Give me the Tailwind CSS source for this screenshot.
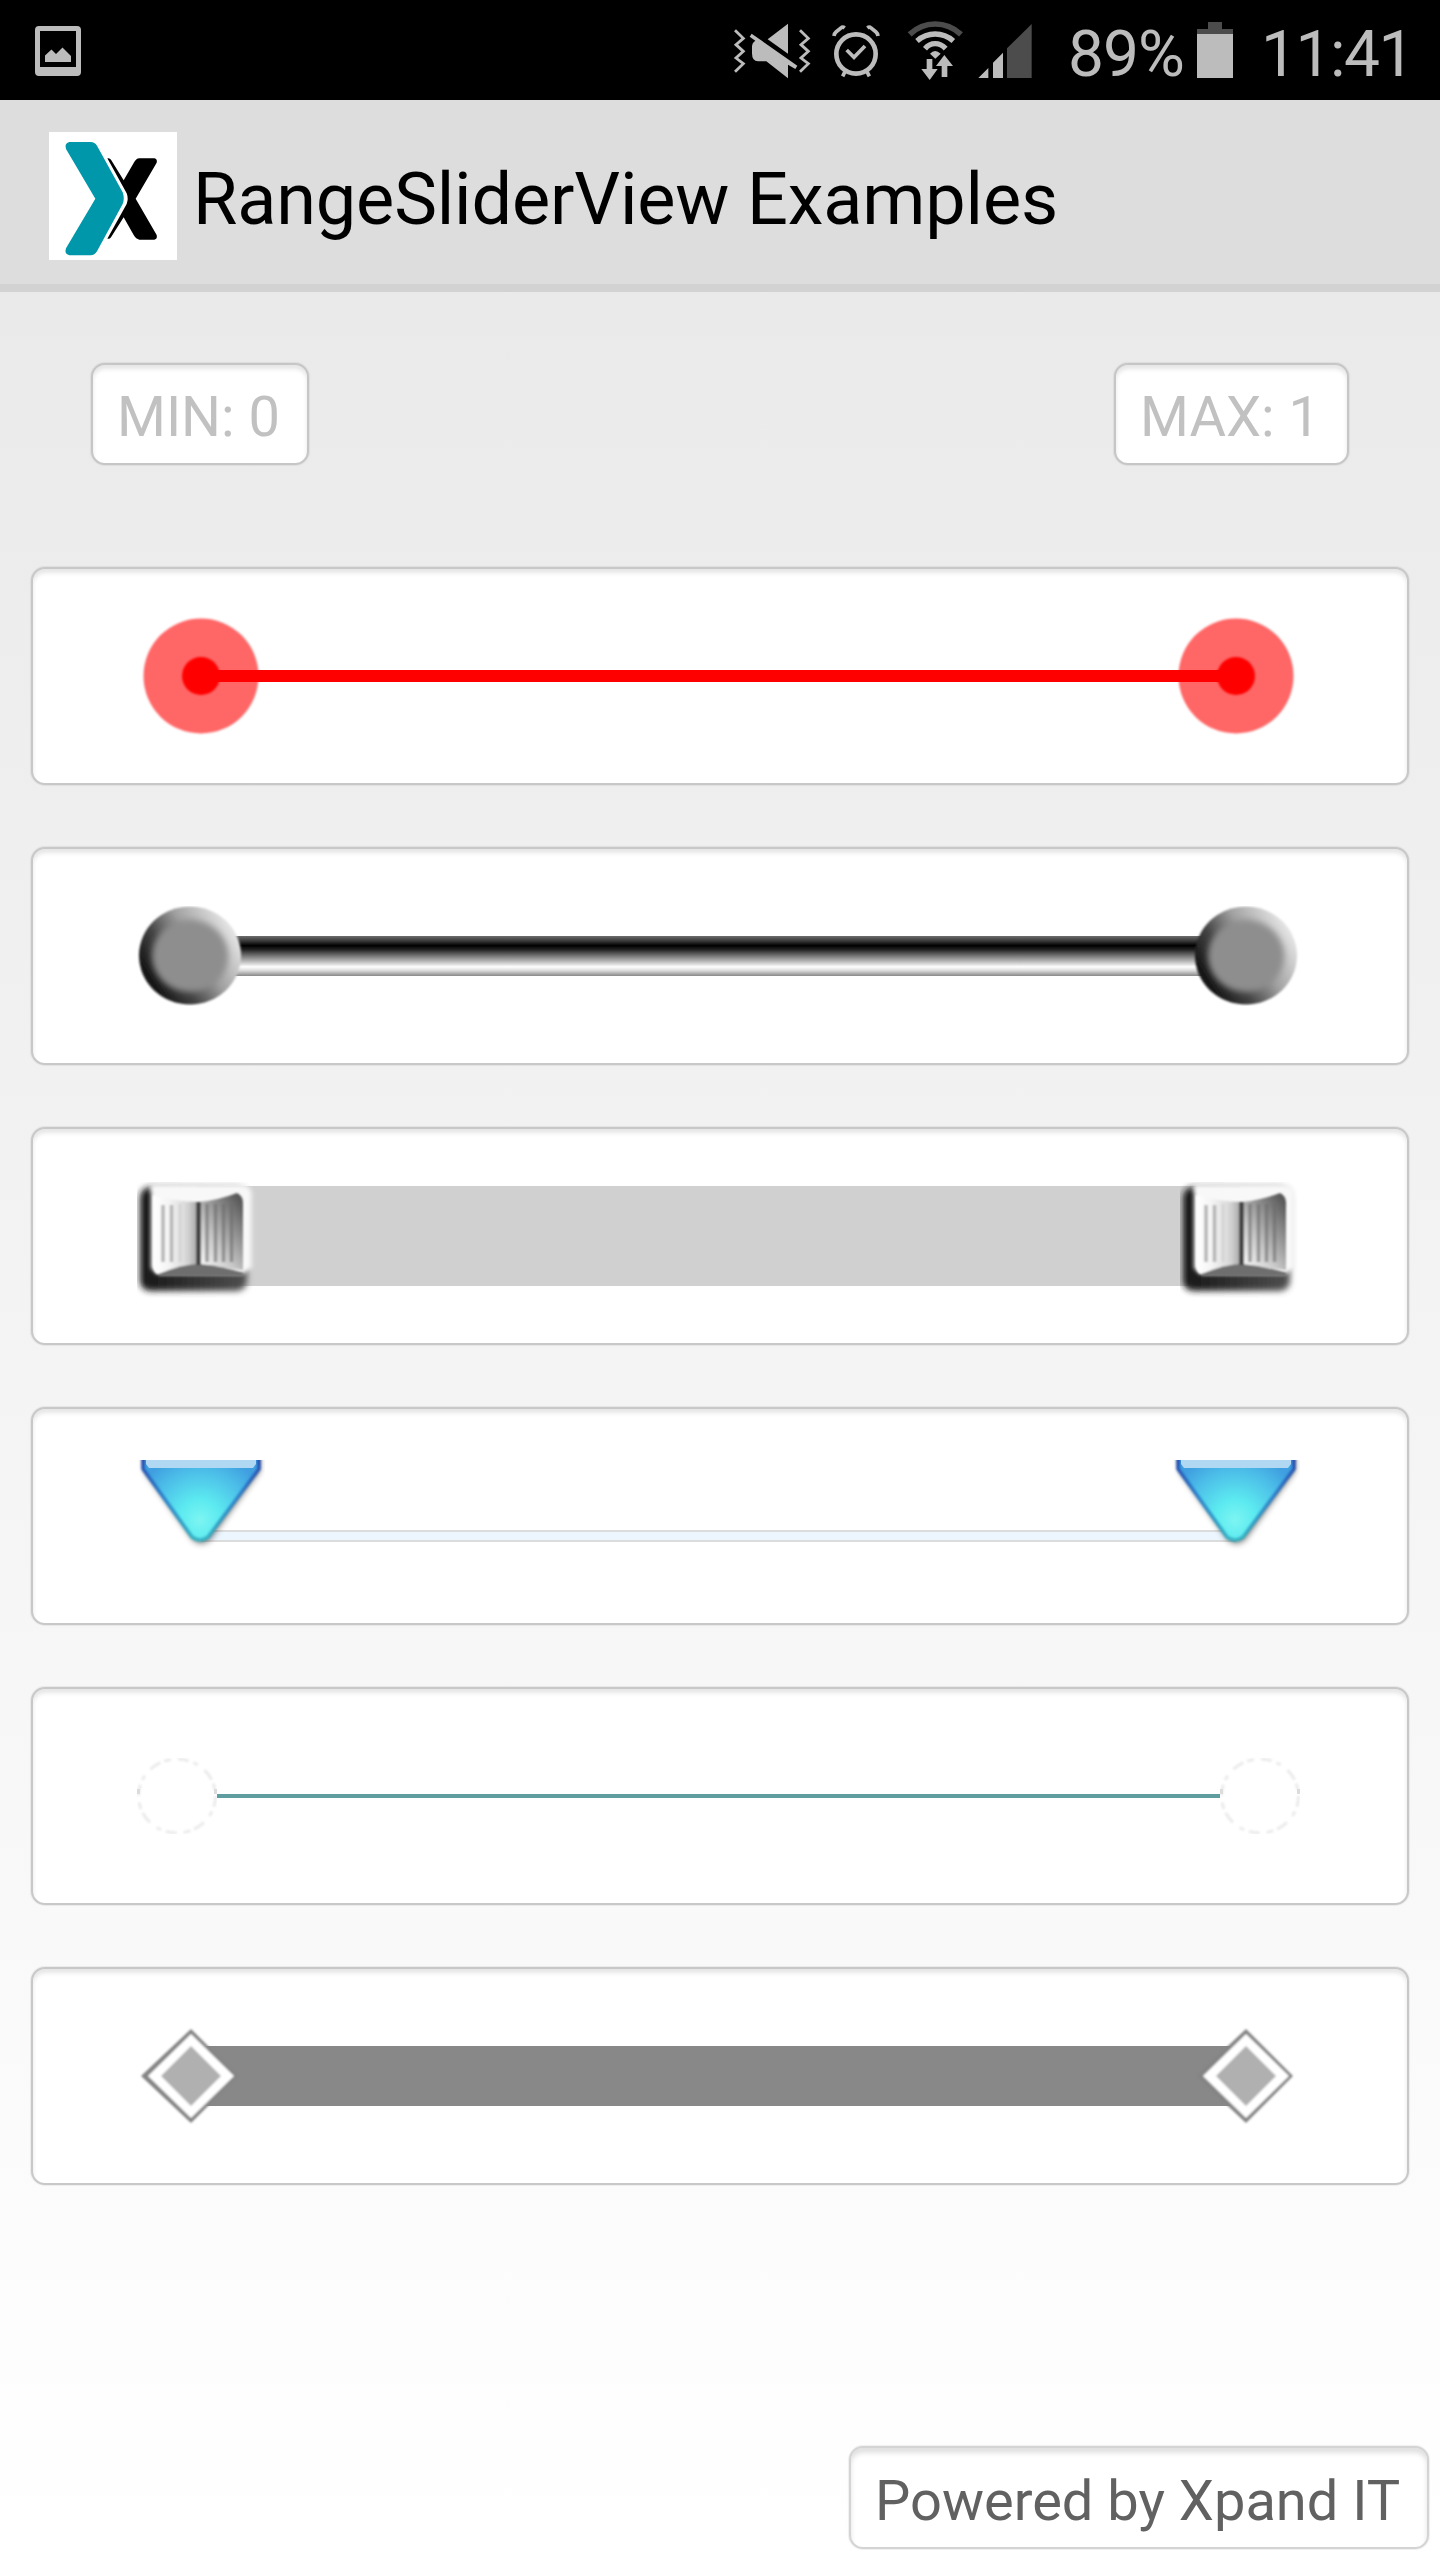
<!DOCTYPE html>
<html lang="en">
<head>
<meta charset="utf-8">
<title>RangeSliderView Examples</title>
<script src="https://cdn.jsdelivr.net/npm/@tailwindcss/browser@4"></script>
</head>
<body class="w-[1440px] h-[2560px] flex flex-col overflow-hidden bg-white font-[Roboto,sans-serif]">

<!-- shared thumb artwork -->
<svg class="absolute size-0" aria-hidden="true">
  <defs>
    <filter id="b05" x="-20%" y="-20%" width="140%" height="140%"><feGaussianBlur stdDeviation=".8"/></filter>
    <filter id="b1" x="-20%" y="-20%" width="140%" height="140%"><feGaussianBlur stdDeviation="1.200"/></filter>
    <filter id="b2" x="-20%" y="-20%" width="140%" height="140%"><feGaussianBlur stdDeviation="2"/></filter>
    <filter id="b3" x="-30%" y="-30%" width="160%" height="160%"><feGaussianBlur stdDeviation="3"/></filter>
    <linearGradient id="bevel" x1="0.08" y1="0.75" x2="0.92" y2="0.25">
      <stop offset="0" stop-color="#111"/><stop offset=".3" stop-color="#444"/><stop offset=".6" stop-color="#a0a0a0"/><stop offset="1" stop-color="#e4e4e4"/>
    </linearGradient>
    <linearGradient id="leftFace"><stop offset="0" stop-color="#fff"/><stop offset=".35" stop-color="#f4f4f4"/><stop offset=".75" stop-color="#d8d8d8"/><stop offset="1" stop-color="#a5a5a5"/></linearGradient>
    <linearGradient id="rightFace" x1="0" y1="1" x2=".8" y2="0"><stop offset="0" stop-color="#fff"/><stop offset=".4" stop-color="#c8c8c8"/><stop offset="1" stop-color="#5a5a5a"/></linearGradient>
    <linearGradient id="base"><stop offset="0" stop-color="#161616"/><stop offset="1" stop-color="#505050"/></linearGradient>
    <radialGradient id="aqua" gradientUnits="userSpaceOnUse" cx="63" cy="60" r="68"><stop offset="0" stop-color="#7df5f2"/><stop offset=".3" stop-color="#5ceaf0"/><stop offset=".75" stop-color="#4bbbe8"/><stop offset="1" stop-color="#3f9fe0"/></radialGradient>
    <linearGradient id="aquaEdge" x1="0" y1="0" x2="0" y2="1"><stop offset="0" stop-color="#2540a8"/><stop offset=".5" stop-color="#2f83cc"/><stop offset="1" stop-color="#38b5c4"/></linearGradient>
    <clipPath id="tri"><rect width="128" height="112"/></clipPath>
  </defs>
  <symbol id="thumb-red" viewBox="0 0 128 128">
    <circle cx="64" cy="64" r="57.500" fill="#f66" filter="url(#b1)"/>
    <circle cx="64" cy="64" r="19" fill="red" filter="url(#b1)"/>
  </symbol>
  <symbol id="thumb-ball" viewBox="0 0 108 100">
    <g filter="url(#b1)"><ellipse cx="53" cy="49.500" rx="51" ry="49" fill="url(#bevel)"/></g>
    <ellipse cx="53" cy="50" rx="38" ry="36" fill="#8e8e8e" filter="url(#b3)"/>
  </symbol>
  <symbol id="thumb-metal" viewBox="0 0 120 116">
    <rect x="3" y="5" width="107" height="104" rx="10" fill="url(#base)" filter="url(#b3)"/>
    <path d="M15 2H104Q115 3 115 13V86L106 92H20L14 86V12Q12 4 15 2Z" fill="#f8f8f8" filter="url(#b2)"/>
    <g filter="url(#b1)">
      <path d="M16 13Q40 20 61 20V84Q40 85 20 92Q16 89 16 82Z" fill="url(#leftFace)"/>
      <path d="M62 20Q82 18 100 11Q107 14 106 24V88Q84 86 62 83Z" fill="url(#rightFace)"/>
      <path d="M22 92Q45 82 62 82Q85 84 106 91V94H22Z" fill="#6e6e6e"/>
      <path d="M26 23V80M34.500 23V80" stroke="#b5b5b5" stroke-width="3.500"/>
      <path d="M43 22V80M50 22V80" stroke="#d2d2d2" stroke-width="2.500"/>
      <path d="M61.500 20V83" stroke="#444" stroke-width="5"/>
      <path d="M70 22V80M78.500 22V80M86.500 22V80M94.500 22V80" stroke="#6a6a6a" stroke-opacity=".6" stroke-width="3.500"/>
    </g>
  </symbol>
  <symbol id="thumb-tri" viewBox="0 0 128 112">
    <g clip-path="url(#tri)">
      <path d="M7 -6H123V11L73 80Q64 87 56 80L8 12Z" fill="#000" fill-opacity=".5" filter="url(#b3)"/>
      <path d="M6 -6H122V9L71 77Q63 83 55 77L6 9Z" fill="url(#aqua)"/>
      <path d="M6 -6V9L55 77Q63 83 71 77L122 9V-6" fill="none" stroke="url(#aquaEdge)" stroke-width="3.500" filter="url(#b1)"/>
      <path d="M9 0H119V4L116 8H12L9 4Z" fill="#b0d8f2"/>
    </g>
  </symbol>
  <symbol id="thumb-ring" viewBox="0 0 80 76">
    <ellipse cx="40" cy="38" rx="39.500" ry="37.500" fill="#fff"/>
    <ellipse cx="40" cy="38" rx="38.500" ry="37" fill="none" stroke="#ebebeb" stroke-width="3" stroke-dasharray="11 5 5 8.500 12 4 7 7" filter="url(#b1)"/>
    <path d="M1.500 31V36M78.500 31V36" stroke="#dcdcdc" stroke-width="3"/>
  </symbol>
  <symbol id="thumb-diamond" viewBox="0 0 108 108">
    <g filter="url(#b05)">
      <path d="M54 7L101 54L54 101L4 54Z" fill="#848484"/>
      <path d="M54 12L97 54L54 96L11 54Z" fill="#fff"/>
      <path d="M54 24L84 54L54 84L24 54Z" fill="#b0b0b0"/>
    </g>
  </symbol>
</svg>

<!-- status bar -->
<div class="h-[100px] shrink-0 bg-black flex items-center text-[#bcbcbc] text-[64px] leading-none">
  <svg class="ml-[35px] w-[46px] h-[50px] mt-[2px]" viewBox="0 0 46 50" fill="#bcbcbc"><path fill-rule="evenodd" d="M4 0H42Q46 0 46 4V46Q46 50 42 50H4Q0 50 0 46V4Q0 0 4 0ZM5 5V41H41V5Z"/><path d="M10 36V29.500L16.500 23.500L21 28L27.500 21.500L36 30V36Z"/></svg>
  <div class="ml-auto flex">
    <svg class="w-[78px] h-[100px]" viewBox="99 0 234 300" fill="#bcbcbc"><path d="M105 91L130 115L108 134L130 154L108 174L130 191L105 215M300 91L325 115L303 134L325 154L303 174L325 191L300 215" fill="none" stroke="#bcbcbc" stroke-width="8.500"/><path d="M264 71V161L203 118ZM155 101L292 197L286 207L264 194V235L199 184H174Q156 184 156 160V140Q156 128 166 122L149 110Z"/></svg>
    <svg class="ml-[21px] w-[48px] h-[100px]" viewBox="396 0 144 300" fill="none" stroke="#bcbcbc"><circle cx="468" cy="162" r="59" stroke-width="14"/><path d="M440 150L462 172L495 138" stroke-width="11"/><path d="M402 108Q403 100 408 96L423 84Q428 79 434 84M534 108Q533 100 528 96L513 84Q508 79 502 84M435 215L428 229M501 215L508 229" stroke-width="11"/></svg>
    <svg class="ml-[27px] w-[56px] h-[100px]" viewBox="621 0 168 300" fill="none" stroke="#bcbcbc" stroke-width="16"><path d="M629 103Q662 72 705.500 72T783 103" stroke="#4c4c4c" stroke-width="17"/><path d="M651 123Q675 102 705.500 102T760 123M675 146Q688 131 705.500 131T737 146"/><path d="M690 161Q705 145 722 161L706 176ZM680 177H697V207H713L689 240L664 207H680ZM733 165L759 198H742V231H725V198H708Z" fill="#bcbcbc" stroke="none"/></svg>
    <svg class="ml-[15px] w-[54px] h-[100px]" viewBox="834 0 162 300" fill="#bcbcbc"><path d="M835 234L865 204V234ZM879 234V188L909 158V234Z"/><path d="M921 234V145L995 72V234Z" fill="#4c4c4c"/></svg>
  </div>
  <span class="ml-[36px] w-[129px] mt-[9px] tracking-[-1px]">89%</span>
  <svg class="w-[36px] h-[56px]" viewBox="0 0 36 56"><path d="M11 0H25V7H36V12H0V7H11Z" fill="#4c4c4c"/><path d="M0 12H36V56H0Z" fill="#bcbcbc"/></svg>
  <span class="ml-[28px] w-[179px] mt-[9px] tracking-[-1.500px]">11:41</span>
</div>

<!-- action bar -->
<header class="h-[192px] shrink-0 bg-[#ddd] border-b-8 border-[#d2d2d2] flex items-center pl-[49px]">
  <svg class="size-[128px] mt-2 bg-white" viewBox="147 396 384 384"><path d="M208 426H272Q284 426 291 437L368 577Q375 596 368 612L291 754Q284 766 272 766H208Q192 762 198 745L286 596L198 447Q192 430 208 426Z" fill="#0097aa"/><path d="M322 475Q329 473 333 479L371 541L401 489Q408 475 418 475H463Q473 477 470 488L407 596L470 705Q473 717 463 719H418Q408 717 401 705L371 652L333 712Q329 718 322 716L380 612Q386 596 380 580Z"/></svg>
  <h1 class="ml-[16px] mt-[16px] text-[72px] leading-[84px] tracking-[-0.150px] text-black">RangeSliderView Examples</h1>
</header>

<main class="grow bg-linear-to-b from-[#eaeaea] to-white pt-[71px] flex flex-col text-[56px] leading-[66px]">
  <div class="flex justify-between px-[91px] text-[#c1c1c1]">
    <div class="w-[218px] h-[102px] pt-[19px] pl-[24px] whitespace-nowrap rounded-[14px] border-2 border-[#c6c6c6] bg-white shadow-[inset_0_4px_4px_#0000001a,0_0_1px_1px_#00000010]">MIN: 0</div>
    <div class="w-[235px] h-[102px] pt-[19px] pl-[24px] whitespace-nowrap rounded-[14px] border-2 border-[#c6c6c6] bg-white shadow-[inset_0_4px_4px_#0000001a,0_0_1px_1px_#00000010]">MAX: 1</div>
  </div>

  <div class="mt-[102px] mx-[31px] flex flex-col gap-[62px]">
    <section class="h-[218px] pl-[104px] pr-[107px] flex items-center rounded-[14px] border-2 border-[#c8c8c8] bg-white shadow-[inset_0_4px_4px_#0000001a,0_0_1px_1px_#00000010]">
      <svg class="size-[128px]"><use href="#thumb-red"/></svg>
      <div class="grow h-3 -mx-16 bg-[#f00] z-10"></div>
      <svg class="size-[128px]"><use href="#thumb-red"/></svg>
    </section>
    <section class="h-[218px] pl-[104px] pr-[106px] flex items-center rounded-[14px] border-2 border-[#c8c8c8] bg-white shadow-[inset_0_4px_4px_#0000001a,0_0_1px_1px_#00000010]">
      <svg class="w-[108px] h-[100px] z-10"><use href="#thumb-ball"/></svg>
      <div class="grow h-10 -mx-[54px] bg-[linear-gradient(#6e6e6e_0%,#3a3a3a_12%,#000_24%,#222_34%,#777_50%,#bbb_64%,#fff_77%,#ddd_86%,#888_100%)]"></div>
      <svg class="w-[108px] h-[100px] z-10"><use href="#thumb-ball"/></svg>
    </section>
    <section class="h-[218px] pl-[104px] pr-[107px] flex items-center rounded-[14px] border-2 border-[#c8c8c8] bg-white shadow-[inset_0_4px_4px_#0000001a,0_0_1px_1px_#00000010]">
      <svg class="w-[120px] h-[116px] mt-[8px] z-10"><use href="#thumb-metal"/></svg>
      <div class="grow h-[100px] -mx-[60px] bg-[#d0d0d0]"></div>
      <svg class="w-[120px] h-[116px] mt-[8px] z-10"><use href="#thumb-metal"/></svg>
    </section>
    <section class="h-[218px] pl-[104px] pr-[107px] flex items-center rounded-[14px] border-2 border-[#c8c8c8] bg-white shadow-[inset_0_4px_4px_#0000001a,0_0_1px_1px_#00000010]">
      <svg class="w-[128px] h-[112px] z-10"><use href="#thumb-tri"/></svg>
      <div class="grow h-3 mt-10 -mx-16 border-y-2 border-[#dcdcdc] bg-[#ecf6ff]"></div>
      <svg class="w-[128px] h-[112px] z-10"><use href="#thumb-tri"/></svg>
    </section>
    <section class="h-[218px] pl-[104px] pr-[107px] flex items-center rounded-[14px] border-2 border-[#c8c8c8] bg-white shadow-[inset_0_4px_4px_#0000001a,0_0_1px_1px_#00000010]">
      <svg class="w-[80px] h-[76px]"><use href="#thumb-ring"/></svg>
      <div class="grow h-1 bg-[#5f9ea0]"></div>
      <svg class="w-[80px] h-[76px]"><use href="#thumb-ring"/></svg>
    </section>
    <section class="h-[218px] pl-[104px] pr-[107px] flex items-center rounded-[14px] border-2 border-[#c8c8c8] bg-white shadow-[inset_0_4px_4px_#0000001a,0_0_1px_1px_#00000010]">
      <svg class="size-[108px] z-10"><use href="#thumb-diamond"/></svg>
      <div class="grow h-[60px] -mx-[54px] bg-[#888]"></div>
      <svg class="size-[108px] z-10"><use href="#thumb-diamond"/></svg>
    </section>
  </div>

  <footer class="mt-auto mb-[11px] mr-[11px] self-end w-[580px] h-[103px] pt-[20px] pl-[24px] whitespace-nowrap rounded-[14px] border-2 border-[#d4d4d4] bg-white text-[#616161] shadow-[inset_0_5px_5px_#0000001f,0_0_1px_1px_#00000010]">Powered by Xpand IT</footer>
</main>
</body>
</html>
